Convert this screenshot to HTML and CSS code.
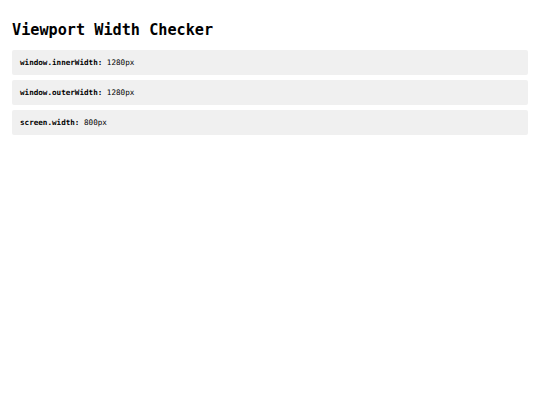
FILE: index.html
```html
<!DOCTYPE html>
<html>
<head>
<meta charset="utf-8">
<link rel="stylesheet" href="styles.css">
</head>
<body>
<h1 class="title">Viewport Width Checker</h1>
<div class="list">
  <div class="row"><span class="key">window.innerWidth:</span> 1280px</div>
  <div class="row"><span class="key">window.outerWidth:</span> 1280px</div>
  <div class="row"><span class="key">screen.width:</span> 800px</div>
</div>
</body>
</html>
```
FILE: styles.css
```css
html, body { margin: 0; padding: 0; background: #fff; }
body {
  padding: 12px;
  font-family: "DejaVu Sans Mono", monospace;
  color: #000;
}
.title {
  margin: 9px 0 10px;
  font-size: 15.2px;
  line-height: 19px;
  font-weight: bold;
}
.list { display: flex; flex-direction: column; gap: 5px; }
.row {
  background: #f0f0f0;
  border-radius: 2px;
  padding: 0 8px;
  height: 25px;
  display: flex;
  align-items: center;
  font-size: 7.6px;
  white-space: pre;
}
.key { font-weight: bold; }
```
